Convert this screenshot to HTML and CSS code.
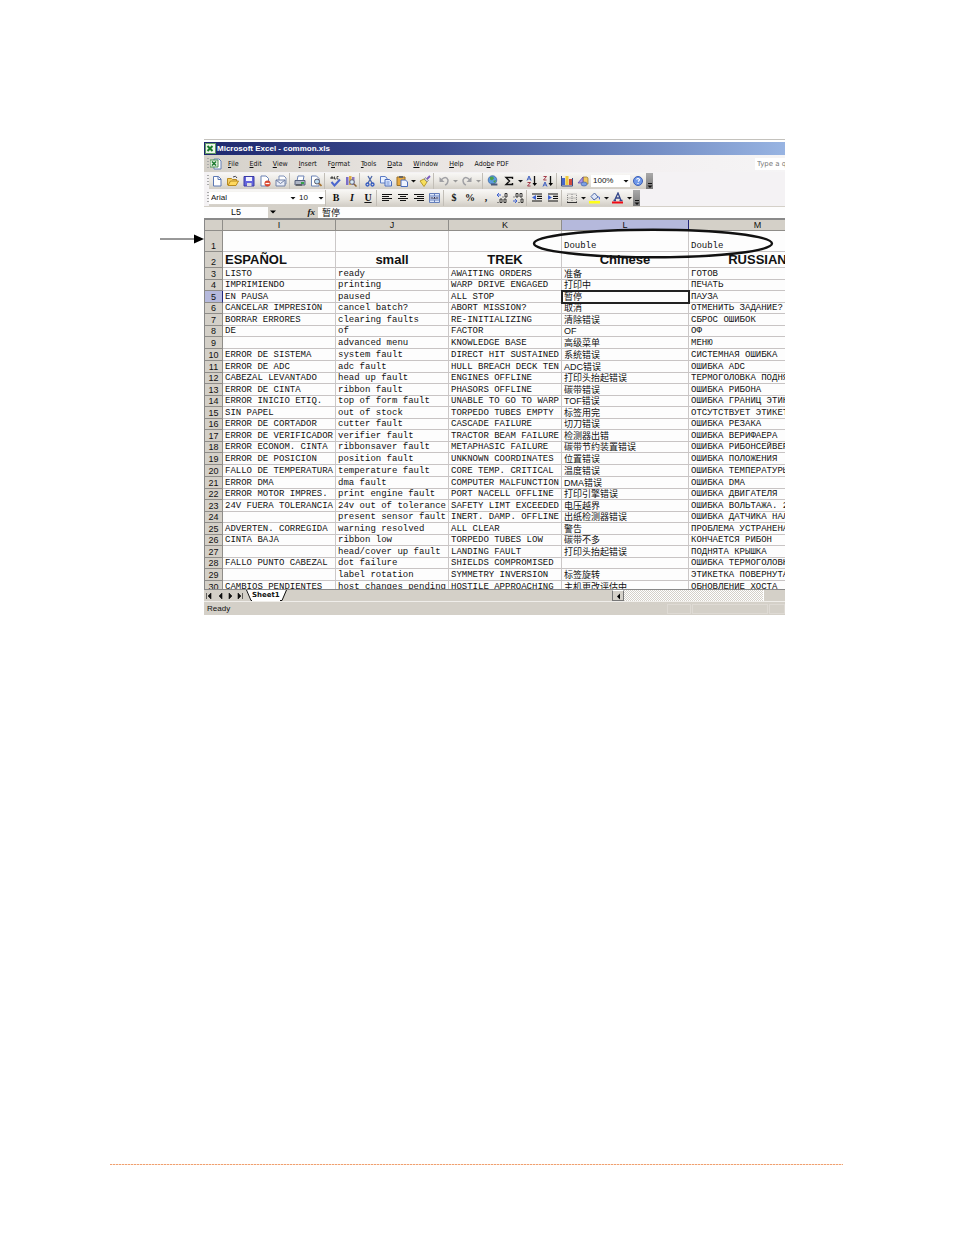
FILE: index.html
```html
<!DOCTYPE html>
<html lang="en">
<head>
<meta charset="utf-8">
<title>Microsoft Excel - common.xls</title>
<link rel="stylesheet" href="styles.css">
</head>
<body>
<svg class="defs" aria-hidden="true">
<symbol id="drop" viewBox="0 0 7 12"><path d="M1 5h5L3.5 7.500z" fill="#111"/></symbol>
<symbol id="drop-off" viewBox="0 0 7 12"><path d="M1 5h5L3.500 7.500z" fill="#999"/></symbol>
<symbol id="cap" viewBox="0 0 7 16"><path d="M2 10.500h4" stroke="#111"/><path d="M1.500 12.500h5L4 15z" fill="#111"/></symbol>
</svg>
<main class="page">
<div class="figure">
<div class="callout"><svg width="44" height="10" viewBox="0 0 44 10" role="img" aria-label="Row 1"><path d="M0 5h36" stroke="#333" stroke-width="1"/><path d="M34 0.500L44 5 34 9.500z" fill="#000"/></svg></div>
<section class="window">
<header class="title"><svg width="11" height="11" viewBox="0 0 11 11"><rect x=".5" y=".5" width="10" height="10" fill="#eef5ea" stroke="#5d9b62"/><path d="M2.500 3l5 5M7.500 3l-5 5" stroke="#187a2c" stroke-width="2"/></svg><h1>Microsoft Excel - common.xls</h1></header>
<nav class="menu"><i class="grip"></i><svg width="12" height="12" viewBox="0 0 12 12"><path d="M4 1h5l2 2v8H4z" fill="#fff" stroke="#6580b8"/><path d="M0 2h8v7H0z" fill="#e7f2e3" stroke="#4d9455"/><path d="M2 3.500l4 4M6 3.500l-4 4" stroke="#187a2c" stroke-width="1.500"/></svg>
<a href="#"><u>F</u>ile</a><a href="#"><u>E</u>dit</a><a href="#"><u>V</u>iew</a><a href="#"><u>I</u>nsert</a><a href="#">F<u>o</u>rmat</a><a href="#"><u>T</u>ools</a><a href="#"><u>D</u>ata</a><a href="#"><u>W</u>indow</a><a href="#"><u>H</u>elp</a><a href="#">Ado<u>b</u>e PDF</a>
<input class="ask" type="text" placeholder="Type a question" aria-label="Type a question for help"></nav>
<div class="bar"><i class="grip"></i>
<button aria-label="New"><svg viewBox="0 0 12 12"><path d="M2.500 1.500h5l2.500 2.500v7h-7.500z" fill="#fff" stroke="#5c78b4"/><path d="M7 1.500V4.500h3" fill="none" stroke="#5c78b4"/></svg></button>
<button aria-label="Open"><svg viewBox="0 0 12 12"><path d="M.5 10V3.500h4l1 1h4v2" fill="#f6cf62" stroke="#b88a20"/><path d="M1 10.500l2.500-4.500h8l-2.500 4.500z" fill="#ffd95f" stroke="#b88a20"/><path d="M6 2q3-2 4 1" fill="none" stroke="#445"/></svg></button>
<button aria-label="Save"><svg viewBox="0 0 12 12"><path d="M1 1.500h10v9.500H1z" fill="#6464dc" stroke="#3a3aa4"/><path d="M3 2h6v4H3z" fill="#f2f2ff"/><path d="M4 8h4.500v3H4z" fill="#ddd"/></svg></button>
<button aria-label="Permission"><svg viewBox="0 0 12 12"><path d="M2 1h5l2.500 2.500V11H2z" fill="#fff" stroke="#6b82b5"/><circle cx="8.500" cy="8.500" r="3" fill="#d9442c"/><path d="M6.500 8.500h4" stroke="#fff" stroke-width="1.300"/></svg></button>
<button aria-label="E-mail"><svg viewBox="0 0 12 12"><path d="M4 1h5l2 2v6H4z" fill="#fff" stroke="#7f91b8"/><path d="M1 5h9v6H1z" fill="#e9edf8" stroke="#7180a6"/><path d="M1 5l4.500 3.500L10 5" fill="none" stroke="#7180a6"/></svg></button>
<i class="sep"></i>
<button aria-label="Print"><svg viewBox="0 0 12 12"><path d="M4 1h6l-1 5H3z" fill="#fff" stroke="#6b82b5"/><path d="M1 5.500h10v4.500H1z" fill="#aeb5c5" stroke="#56617c"/><path d="M2 10h6" stroke="#333"/><path d="M7 8h3" stroke="#37a34a" stroke-width="2"/></svg></button>
<button aria-label="Print preview"><svg viewBox="0 0 12 12"><path d="M1.500 1h5L9 3.500V11H1.500z" fill="#fff" stroke="#6b82b5"/><circle cx="7" cy="6.500" r="2.500" fill="#bcdcf4" stroke="#556"/><path d="M9 8.500l2.500 2.500" stroke="#a5702a" stroke-width="1.700"/></svg></button>
<i class="sep"></i>
<button aria-label="Spelling"><svg viewBox="0 0 12 12"><path d="M2 4V2h2v2M2 3h2M5.500 1.500v2.500h1.500M9.500 1.500H8V4h1.500" fill="none" stroke="#222" stroke-width=".8"/><path d="M2.500 7l3 3.500L11 4.500" fill="none" stroke="#4b67ce" stroke-width="2"/></svg></button>
<button aria-label="Research"><svg viewBox="0 0 12 12"><path d="M1 2h2.500v8H1z" fill="#7b6ec9"/><path d="M4 1h2.500v9H4z" fill="#e0ad45"/><path d="M7 2h2.500v8H7z" fill="#8d78be"/><circle cx="7" cy="7" r="2.300" fill="#d7eaf7" stroke="#667"/><path d="M9 9l2.500 2.500" stroke="#8b6532" stroke-width="1.500"/></svg></button>
<i class="sep"></i>
<button aria-label="Cut"><svg viewBox="0 0 12 12"><path d="M4 1l4 7M8 1L4 8" stroke="#4c67a8" stroke-width="1.300"/><circle cx="3.500" cy="9.500" r="1.500" fill="none" stroke="#3158c0" stroke-width="1.300"/><circle cx="8.500" cy="9.500" r="1.500" fill="none" stroke="#3158c0" stroke-width="1.300"/></svg></button>
<button aria-label="Copy"><svg viewBox="0 0 12 12"><path d="M.5 1.500H5L7 3v5H.5z" fill="#eaf1ff" stroke="#5c7cc6"/><path d="M5 4.500h4.500l2 2V11H5z" fill="#d9e6ff" stroke="#4a6cbc"/><path d="M6.500 7h3M6.500 9h3" stroke="#6e8cd0"/></svg></button>
<button aria-label="Paste"><svg viewBox="0 0 12 12"><path d="M1 2h8v8.500H1z" fill="#e8a93e" stroke="#99702a"/><path d="M3 1h4v2H3z" fill="#666"/><path d="M5 5h4.500L11.500 7v4.500H5z" fill="#eef3ff" stroke="#4a6cbc"/></svg></button><svg class="drop"><use href="#drop"/></svg>
<button aria-label="Format painter"><svg viewBox="0 0 12 12"><path d="M1 6l4-2 3 3-3 4.500z" fill="#f7df5c" stroke="#b89a2a"/><path d="M5 4l3 3 1.500-1.500-3-3z" fill="#ccc" stroke="#777" stroke-width=".6"/><path d="M8 4l3-3" stroke="#7a5cc0" stroke-width="1.800"/></svg></button>
<i class="sep"></i>
<button aria-label="Undo"><svg viewBox="0 0 12 12"><path d="M3 5q5-5 7 0 0 4-3 5" fill="none" stroke="#a0a0a4" stroke-width="1.500"/><path d="M1.500 2v5h5z" fill="#a0a0a4"/></svg></button><svg class="drop"><use href="#drop-off"/></svg>
<button aria-label="Redo"><svg viewBox="0 0 12 12"><path d="M9 5Q4 0 2 5q0 4 3 5" fill="none" stroke="#a0a0a4" stroke-width="1.500"/><path d="M10.500 2v5h-5z" fill="#a0a0a4"/></svg></button><svg class="drop"><use href="#drop-off"/></svg>
<i class="sep"></i>
<button aria-label="Hyperlink"><svg viewBox="0 0 12 12"><circle cx="5.500" cy="5" r="4.300" fill="#5a9ade" stroke="#3560a0" stroke-width=".7"/><path d="M3 2l3-.5 1 2-2 2-2-1zM6 6l3-1-1 3z" fill="#4aa24c"/><path d="M4 9.500h3M7 9.500h4" stroke="#4a5a78" stroke-width="2.200" stroke-dasharray="3 .6"/></svg></button>
<button aria-label="AutoSum"><svg viewBox="0 0 12 12"><path d="M9.500 4V2.500H3L6.500 6 3 9.500h6.500V8" fill="none" stroke="#111" stroke-width="1.400"/></svg></button><svg class="drop"><use href="#drop"/></svg>
<button aria-label="Sort ascending"><svg viewBox="0 0 12 12"><path d="M1 5.500L3 1l2 4.500M2 4h2" fill="none" stroke="#3e5fc0"/><path d="M1.500 7.500h3l-3 3.500h3" fill="none" stroke="#a33a4a"/><path d="M8.500 1v8" stroke="#111" stroke-width="1.300"/><path d="M6.500 8h4.500l-2.300 3z"/></svg></button>
<button aria-label="Sort descending"><svg viewBox="0 0 12 12"><path d="M1.500 1.500h3l-3 3.500h3" fill="none" stroke="#a33a4a"/><path d="M1 11.500L3 7l2 4.500M2 10h2" fill="none" stroke="#3e5fc0"/><path d="M8.500 1v8" stroke="#111" stroke-width="1.300"/><path d="M6.500 8h4.500l-2.300 3z"/></svg></button>
<i class="sep"></i>
<button aria-label="Chart wizard"><svg viewBox="0 0 12 12"><path d="M1 3h3v7H1z" fill="#4668cc"/><path d="M4.500 1h3v9h-3z" fill="#f0c93b"/><path d="M8 4h3v6H8z" fill="#d2493e"/><path d="M.5 1v10h11V3" fill="none" stroke="#3a4a80"/></svg></button>
<button aria-label="Drawing"><svg viewBox="0 0 12 12"><path d="M6 2h4l1 1v6H6z" fill="#f0c860" stroke="#93762e" stroke-width=".7"/><path d="M1 8l5-6v6z" fill="#aa95e5" stroke="#6650aa" stroke-width=".8"/><ellipse cx="7" cy="9" rx="3" ry="2" fill="#7da0e4" stroke="#4664ac" stroke-width=".7"/></svg></button>
<span class="combo zoom"><select aria-label="Zoom"><option>100%</option></select><svg class="drop"><use href="#drop"/></svg></span>
<button aria-label="Help"><svg viewBox="0 0 12 12"><circle cx="6" cy="6" r="4.500" fill="#6f98e8" stroke="#3c5fb8"/><path d="M4.500 4.500q1.500-2 3 0 0 1-1.500 2M6 8v1" fill="none" stroke="#fff" stroke-width="1.200"/></svg></button>
<svg class="cap"><use href="#cap"/></svg></div>
<div class="bar"><i class="grip"></i>
<span class="combo font"><select aria-label="Font"><option>Arial</option></select><svg class="drop"><use href="#drop"/></svg></span>
<span class="combo size"><select aria-label="Font size"><option>10</option></select><svg class="drop"><use href="#drop"/></svg></span>
<i class="sep"></i>
<button class="glyph"><b>B</b></button><button class="glyph"><em>I</em></button><button class="glyph"><u>U</u></button>
<i class="sep"></i>
<button aria-label="Align left"><svg viewBox="0 0 12 12"><path d="M1 2.500h10M1 4.500h7M1 6.500h10M1 8.500h7" stroke="#111"/></svg></button>
<button aria-label="Center"><svg viewBox="0 0 12 12"><path d="M1 2.500h10M3 4.500h6M1 6.500h10M3 8.500h6" stroke="#111"/></svg></button>
<button aria-label="Align right"><svg viewBox="0 0 12 12"><path d="M1 2.500h10M4 4.500h7M1 6.500h10M4 8.500h7" stroke="#111"/></svg></button>
<button aria-label="Merge and center"><svg viewBox="0 0 12 12"><path d="M.5 1.500h10v9H.5zM.5 4h10M.5 8h10M5.500 1.500V4M5.500 8v2.500" fill="#dce6fa" stroke="#6680bb"/><path d="M1.500 6h2.500M7 6h2.500M4.800 7L5.500 5l.7 2" stroke="#224" fill="none"/></svg></button>
<i class="sep"></i>
<button class="glyph"><b>$</b></button><button class="glyph"><b>%</b></button><button class="glyph"><b>,</b></button>
<button aria-label="Increase decimal"><svg viewBox="0 0 12 12"><path d="M1 3h4M3 1L1 3l2 2" fill="none" stroke="#3e62d0"/><path d="M7 4.500v1M2 10v1M9 1.500h2v3.500H9zM4 7h2v3.500H4zM8 7h2v3.500H8z" fill="none" stroke="#222" stroke-width=".9"/></svg></button>
<button aria-label="Decrease decimal"><svg viewBox="0 0 12 12"><path d="M1 9h4M3 7l2 2-2 2" fill="none" stroke="#3e62d0"/><path d="M2 4.500v1M7 10v1M4 1.500h2v3.500H4zM8 1.500h2v3.500H8zM9 7h2v3.500H9z" fill="none" stroke="#222" stroke-width=".9"/></svg></button>
<i class="sep"></i>
<button aria-label="Decrease indent"><svg viewBox="0 0 12 12"><path d="M1 2h10M6 4.300h5M6 6.500h5M1 9h10" stroke="#111" stroke-width="1.200"/><path d="M5 3v5L1 5.500z" fill="#3e62d0"/></svg></button>
<button aria-label="Increase indent"><svg viewBox="0 0 12 12"><path d="M1 2h10M6 4.300h5M6 6.500h5M1 9h10" stroke="#111" stroke-width="1.200"/><path d="M1 3v5l4-2.500z" fill="#3e62d0"/></svg></button>
<i class="sep"></i>
<button aria-label="Borders"><svg viewBox="0 0 12 12"><path d="M1.500 10V2h9v8M1.500 6h9M6 2v8" fill="none" stroke="#8a8a8a" stroke-dasharray="1 1"/><path d="M1 10.500h10" stroke="#333"/></svg></button><svg class="drop"><use href="#drop"/></svg>
<button aria-label="Fill color"><svg viewBox="0 0 12 12"><path d="M2 4.500L5.500 1 9 5 5 8z" fill="#dfe7f7" stroke="#4f6aa8"/><path d="M9 4q3 1 1.500 4z" fill="#3e62d0"/><path d="M0 9h11v2.500H0z" fill="#ffff19"/></svg></button><svg class="drop"><use href="#drop"/></svg>
<button aria-label="Font color"><svg viewBox="0 0 12 12"><path d="M2.500 8.500L6 1l3 7.500M4 6h4M1.500 8.500h2.500M7.500 8.500h3" fill="none" stroke="#34478a" stroke-width="1.300"/><path d="M0 9.500h11v2H0z" fill="#f00a14"/></svg></button><svg class="drop"><use href="#drop"/></svg>
<svg class="cap"><use href="#cap"/></svg></div>
<div class="formula"><input class="name" aria-label="Name box" value="L5"><svg width="14" height="12" viewBox="0 0 14 12"><path d="M2 4.500h6L5 7.500z"/></svg><span class="fx"><em>fx</em></span><input class="value" aria-label="Formula" value="暂停"></div>
<div class="sheet">
<table>
<colgroup><col class="c-row"><col class="c-std"><col class="c-std"><col class="c-std"><col class="c-zh"><col class="c-ru"></colgroup>
<thead><tr><th></th><th>I</th><th>J</th><th>K</th><th class="on">L</th><th>M</th></tr></thead>
<tbody>
<tr class="first"><th>1</th><td></td><td></td><td></td><td>Double</td><td>Double</td></tr>
<tr class="names"><th>2</th><td class="left">ESPAÑOL</td><td>small</td><td>TREK</td><td>Chinese</td><td>RUSSIAN</td></tr>
<tr><th>3</th><td>LISTO</td><td>ready</td><td>AWAITING ORDERS</td><td class="zh">准备</td><td>ГОТОВ</td></tr>
<tr><th>4</th><td>IMPRIMIENDO</td><td>printing</td><td>WARP DRIVE ENGAGED</td><td class="zh">打印中</td><td>ПЕЧАТЬ</td></tr>
<tr><th class="on">5</th><td>EN PAUSA</td><td>paused</td><td>ALL STOP</td><td class="zh active">暂停</td><td>ПАУЗА</td></tr>
<tr><th>6</th><td>CANCELAR IMPRESIÓN</td><td>cancel batch?</td><td>ABORT MISSION?</td><td class="zh">取消</td><td>ОТМЕНИТЬ ЗАДАНИЕ?</td></tr>
<tr><th>7</th><td>BORRAR ERRORES</td><td>clearing faults</td><td>RE-INITIALIZING</td><td class="zh">清除错误</td><td>СБРОС ОШИБОК</td></tr>
<tr><th>8</th><td>DE</td><td>of</td><td>FACTOR</td><td class="zh">OF</td><td>ОФ</td></tr>
<tr><th>9</th><td></td><td>advanced menu</td><td>KNOWLEDGE BASE</td><td class="zh">高级菜单</td><td>МЕНЮ</td></tr>
<tr><th>10</th><td>ERROR DE SISTEMA</td><td>system fault</td><td>DIRECT HIT SUSTAINED</td><td class="zh">系统错误</td><td>СИСТЕМНАЯ ОШИБКА</td></tr>
<tr><th>11</th><td>ERROR DE ADC</td><td>adc fault</td><td>HULL BREACH DECK TEN</td><td class="zh">ADC错误</td><td>ОШИБКА ADC</td></tr>
<tr><th>12</th><td>CABEZAL LEVANTADO</td><td>head up fault</td><td>ENGINES OFFLINE</td><td class="zh">打印头抬起错误</td><td>ТЕРМОГОЛОВКА ПОДНЯТА</td></tr>
<tr><th>13</th><td>ERROR DE CINTA</td><td>ribbon fault</td><td>PHASORS OFFLINE</td><td class="zh">碳带错误</td><td>ОШИБКА РИБОНА</td></tr>
<tr><th>14</th><td>ERROR INICIO ETIQ.</td><td>top of form fault</td><td>UNABLE TO GO TO WARP</td><td class="zh">TOF错误</td><td>ОШИБКА ГРАНИЦ ЭТИКЕТКИ</td></tr>
<tr><th>15</th><td>SIN PAPEL</td><td>out of stock</td><td>TORPEDO TUBES EMPTY</td><td class="zh">标签用完</td><td>ОТСУТСТВУЕТ ЭТИКЕТКА</td></tr>
<tr><th>16</th><td>ERROR DE CORTADOR</td><td>cutter fault</td><td>CASCADE FAILURE</td><td class="zh">切刀错误</td><td>ОШИБКА РЕЗАКА</td></tr>
<tr><th>17</th><td>ERROR DE VERIFICADOR</td><td>verifier fault</td><td>TRACTOR BEAM FAILURE</td><td class="zh">检测器出错</td><td>ОШИБКА ВЕРИФАЕРА</td></tr>
<tr><th>18</th><td>ERROR ECONOM. CINTA</td><td>ribbonsaver fault</td><td>METAPHASIC FAILURE</td><td class="zh">碳带节约装置错误</td><td>ОШИБКА РИБОНСЕЙВЕРА</td></tr>
<tr><th>19</th><td>ERROR DE POSICION</td><td>position fault</td><td>UNKNOWN COORDINATES</td><td class="zh">位置错误</td><td>ОШИБКА ПОЛОЖЕНИЯ</td></tr>
<tr><th>20</th><td>FALLO DE TEMPERATURA</td><td>temperature fault</td><td>CORE TEMP. CRITICAL</td><td class="zh">温度错误</td><td>ОШИБКА ТЕМПЕРАТУРЫ</td></tr>
<tr><th>21</th><td>ERROR DMA</td><td>dma fault</td><td>COMPUTER MALFUNCTION</td><td class="zh">DMA错误</td><td>ОШИБКА DMA</td></tr>
<tr><th>22</th><td>ERROR MOTOR IMPRES.</td><td>print engine fault</td><td>PORT NACELL OFFLINE</td><td class="zh">打印引擎错误</td><td>ОШИБКА ДВИГАТЕЛЯ</td></tr>
<tr><th>23</th><td>24V FUERA TOLERANCIA</td><td>24v out of tolerance</td><td>SAFETY LIMT EXCEEDED</td><td class="zh">电压越界</td><td>ОШИБКА ВОЛЬТАЖА. 24V</td></tr>
<tr><th>24</th><td></td><td>present sensor fault</td><td>INERT. DAMP. OFFLINE</td><td class="zh">出纸检测器错误</td><td>ОШИБКА ДАТЧИКА НАЛИЧИЯ</td></tr>
<tr><th>25</th><td>ADVERTEN. CORREGIDA</td><td>warning resolved</td><td>ALL CLEAR</td><td class="zh">警告</td><td>ПРОБЛЕМА УСТРАНЕНА</td></tr>
<tr><th>26</th><td>CINTA BAJA</td><td>ribbon low</td><td>TORPEDO TUBES LOW</td><td class="zh">碳带不多</td><td>КОНЧАЕТСЯ РИБОН</td></tr>
<tr><th>27</th><td></td><td>head/cover up fault</td><td>LANDING FAULT</td><td class="zh">打印头抬起错误</td><td>ПОДНЯТА КРЫШКА</td></tr>
<tr><th>28</th><td>FALLO PUNTO CABEZAL</td><td>dot failure</td><td>SHIELDS COMPROMISED</td><td class="zh"></td><td>ОШИБКА ТЕРМОГОЛОВКИ</td></tr>
<tr><th>29</th><td></td><td>label rotation</td><td>SYMMETRY INVERSION</td><td class="zh">标签旋转</td><td>ЭТИКЕТКА ПОВЕРНУТА</td></tr>
<tr><th>30</th><td>CAMBIOS PENDIENTES</td><td>host changes pending</td><td>HOSTILE APPROACHING</td><td class="zh">主机更改评估中</td><td>ОБНОВЛЕНИЕ ХОСТА</td></tr>
</tbody>
</table>
</div>
<div class="tabs"><svg width="42" height="11" viewBox="0 0 42 11"><path d="M2.500 3v6M7 3v6L4 6zM18 3v6l-3-3zM25 3v6l3-3zM34 3v6l3-3zM38.500 3v6" fill="#111" stroke="#111" stroke-width=".6"/></svg><a class="tab" href="#"><svg width="6" height="11" viewBox="0 0 6 11"><path d="M0 0h6v11H5z" fill="#fff"/><path d="M.5 0L5 10.500h1" fill="none" stroke="#111"/></svg><span>Sheet1</span><svg width="7" height="11" viewBox="0 0 7 11"><path d="M0 0h6L1.500 11H0z" fill="#fff"/><path d="M6.500 0L2 10.500H0" fill="none" stroke="#111"/></svg></a><button class="scroll" aria-label="Scroll left"><svg width="9" height="9" viewBox="0 0 9 9"><path d="M6 1.500v6l-3-3z"/></svg></button><div class="track"></div><div class="thumb"></div></div>
<footer class="status"><span>Ready</span><i class="p1"></i><i class="p2"></i><i class="p3"></i></footer>
<svg class="ring" width="242" height="31" viewBox="0 0 242 31" aria-hidden="true"><ellipse cx="121" cy="15.500" rx="119" ry="13.800" fill="none" stroke="#111" stroke-width="2.400"/></svg>
</section>
</div>
<hr class="rule">
</main>
</body>
</html>
```

FILE: styles.css
```css
* { box-sizing: border-box; }
body { margin: 0; background: #fff; color: #111; font-family: "Liberation Sans", "Noto Sans CJK SC", sans-serif; }
.defs { position: absolute; width: 0; height: 0; }
.page { min-height: 100vh; display: flex; flex-direction: column; justify-content: space-between; padding: 139px 0 70px; }
.figure { display: grid; grid-template-columns: 204px minmax(0, 1fr) 169px; align-items: start; }
.callout { display: flex; justify-content: flex-end; padding-top: 95px; }
svg { display: block; flex: none; }
.window { position: relative; border-top: 1px solid #c4c2bd; padding-top: 2px; font-size: 8px; }
.title { display: flex; align-items: center; gap: 1px; height: 13px; padding-left: 1px; background: linear-gradient(90deg, #1e286e, #3d4d90 40%, #6078b4 65%, #98b4e2); color: #fff; }
.title h1 { margin: 0; font-size: 8px; line-height: 12px; font-weight: bold; }
.menu { display: flex; align-items: center; height: 17px; background: linear-gradient(90deg, #d4d0c8, #e6e2de 30%, #f2eeef 65%, #f5f4f5); font-family: "DejaVu Sans Condensed", "DejaVu Sans", sans-serif; font-size: 7px; }
.menu a { color: #111; text-decoration: none; padding: 0 5px 0 6px; white-space: nowrap; }
.ask { margin-left: auto; width: 30px; height: 12px; border: 0; padding: 0 0 0 2px; font: 7px "DejaVu Sans", sans-serif; background: #fff; }
.ask::placeholder { color: #777; opacity: 1; }
.grip { flex: none; width: 2px; height: 11px; margin: 0 1px 0 3px; background: repeating-linear-gradient(#aaa 0 1px, transparent 1px 3px); }
.bar { display: flex; align-items: center; height: 17px; background: #f4f2f4; }
.bar > * { background-image: linear-gradient(#f8f7f5, #e6e3dd 60%, #d2cec6); }
.bar > .grip { width: 2px; height: 11px; margin: 0 0 0 3px; background: repeating-linear-gradient(#aaa 0 1px, transparent 1px 3px); }
.bar button { flex: none; width: 16px; height: 16px; padding: 2px; border: 0; background-color: transparent; color: #111; }
.bar button svg { width: 12px; height: 12px; }
.bar button.glyph { padding: 0; font: 10px/16px "Liberation Serif", serif; text-align: center; }
.glyph em { font-weight: bold; }
.glyph u { font-weight: bold; }
.sep { flex: none; width: 3px; height: 16px; border-left: 1px solid #c2beb7; }
.drop { width: 7px; height: 16px; }
.combo { display: flex; align-items: center; height: 16px; }
.combo select { appearance: none; flex: 1; min-width: 0; height: 12px; border: 0; padding: 0 2px; background: #fff; color: #111; font: 8px/12px "Liberation Sans", sans-serif; }
.combo .drop { width: 8px; height: 12px; background: #fff; }
.font { width: 88px; }
.size { width: 28px; }
.zoom { width: 39px; }
.cap { width: 7px; height: 16px; }
.bar > .cap { background: linear-gradient(#aaa, #777); }
.formula { display: flex; height: 12px; background: #d4d0c8; align-items: center; }
.formula input { border: 0; padding: 0; height: 11px; background: #fdfdfd; color: #111; }
.formula .name { width: 64px; text-align: center; font: 9px "Liberation Sans", sans-serif; }
.formula .fx { width: 36px; text-align: right; padding-right: 3px; font: bold 9px/10px "Liberation Serif", serif; }
.formula .value { flex: 1; min-width: 0; padding-left: 4px; font: 9px/11px "Noto Sans CJK SC", sans-serif; }
.sheet { height: 371px; overflow: hidden; border-top: 2px solid #888; border-left: 1px solid #888; background: #fdfdfd; }
table { border-collapse: separate; border-spacing: 0; table-layout: fixed; width: 622px; }
.c-row { width: 18px; }
.c-std { width: 113px; }
.c-zh { width: 127px; }
.c-ru { width: 138px; }
th, td { padding: 0; overflow: hidden; white-space: nowrap; border-right: 1px solid #cbc8c8; border-bottom: 1px solid #c8c4c4; vertical-align: bottom; }
th { background: #d4d0c8; border-color: #8f8d89; font: 9px/10px "Liberation Sans", sans-serif; text-align: center; }
thead th { height: 11px; }
th.on { background: #b5b9dc; border-right-color: #22257a; }
td { padding-left: 2px; font: 9px/10px "Liberation Mono", monospace; }
tbody tr { height: 12px; }
tbody tr:nth-child(even) { height: 11px; }
tbody tr:nth-child(10n) { height: 12px; }
tbody tr.first { height: 21px; }
tbody tr.names { height: 16px; }
.names td { font: bold 13px/14px "Liberation Sans", sans-serif; text-align: center; padding: 0; }
.names td.left { text-align: left; padding-left: 2px; }
td.zh { font-family: "Liberation Sans", "Noto Sans CJK SC", sans-serif; }
td.active { outline: 2px solid #222; outline-offset: -1px; }
.tabs { display: flex; height: 12px; background: #d4d0c8; border-top: 1px solid #888; }
.tab { display: flex; color: #111; text-decoration: none; font: bold 7px/11px "DejaVu Sans", sans-serif; margin-right: auto; }
.tab span { background: #fff; }
.scroll { width: 12px; padding: 1px; border: 1px solid #777; border-top-color: #fff; background: #d4d0c8; }
.track { width: 139px; background: repeating-conic-gradient(#fff 0 25%, #d4d0c8 0 50%) 0 0 / 2px 2px; }
.thumb { width: 22px; background: #d4d0c8; border-left: 1px solid #fff; }
.status { display: flex; align-items: center; height: 14px; padding-left: 3px; background: #d4d0c8; border-top: 1px solid #f0eeea; font: 8px/12px "Liberation Sans", sans-serif; }
.status span { margin-right: auto; }
.status i { height: 10px; border: 1px solid #dedad4; margin-right: 1px; }
.status .p1 { width: 24px; }
.status .p2 { width: 76px; }
.status .p3 { width: 16px; margin-right: 0; }
.ring { position: absolute; left: 328px; top: 88px; }
.rule { width: auto; align-self: stretch; height: 1px; margin: 0 111px 0 110px; border: 0; background: repeating-linear-gradient(90deg, #f0a070 0 2px, #fbe0cc 2px 3px); }
```
